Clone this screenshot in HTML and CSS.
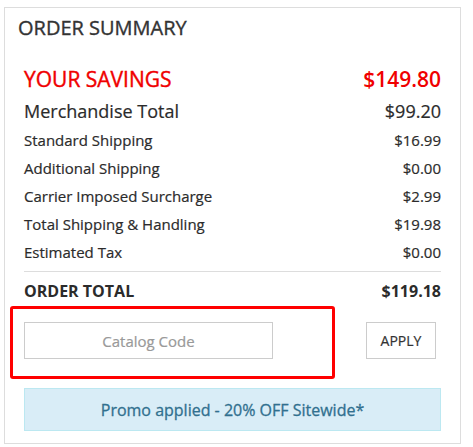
FILE: index.html
```html
<!DOCTYPE html>
<html>
<head>
<meta charset="utf-8">
<link rel="stylesheet" href="styles.css">
</head>
<body>
<div class="page">
  <div class="card">
    <h2 class="title">ORDER SUMMARY</h2>
    <div class="body">
      <div class="row savings"><span>YOUR SAVINGS</span><span class="amt">$149.80</span></div>
      <div class="row merch"><span>Merchandise Total</span><span>$99.20</span></div>
      <div class="row small"><span>Standard Shipping</span><span>$16.99</span></div>
      <div class="row small"><span>Additional Shipping</span><span>$0.00</span></div>
      <div class="row small"><span>Carrier Imposed Surcharge</span><span>$2.99</span></div>
      <div class="row small"><span>Total Shipping &amp; Handling</span><span>$19.98</span></div>
      <div class="row small"><span>Estimated Tax</span><span>$0.00</span></div>
      <div class="row total"><span>ORDER TOTAL</span><span>$119.18</span></div>
      <div class="code-row">
        <input class="code-input" type="text" placeholder="Catalog Code">
        <button class="apply">APPLY</button>
        <div class="highlight"></div>
      </div>
      <div class="promo">Promo applied - 20% OFF Sitewide*</div>
    </div>
  </div>
</div>
</body>
</html>
```

FILE: styles.css
```css
html, body {
  margin: 0;
  padding: 0;
  background: #fff;
}
body {
  font-family: "Open Sans", "Liberation Sans", sans-serif;
  color: #2b2b2b;
  -webkit-text-stroke: 0.2px currentColor;
}
.page {
  padding: 7px 12px 2px 4px;
}
.card {
  border: 1px solid #ddd;
  padding: 8px 13px 12px 13px;
}
.title {
  margin: 0;
  font-size: 20px;
  font-weight: 400;
  line-height: 24px;
  color: #333;
  -webkit-text-stroke: 0.35px currentColor;
}
.body {
  padding: 0 6px;
  margin-top: 25px;
}
.row {
  display: flex;
  justify-content: space-between;
  align-items: baseline;
}
.savings {
  color: #f00000;
  font-size: 21px;
  line-height: 28px;
  font-weight: 400;
  -webkit-text-stroke: 0.4px currentColor;
}
.savings .amt {
  font-weight: 600;
  -webkit-text-stroke: 0;
}
.merch {
  font-size: 18px;
  line-height: 30px;
  margin-top: 3px;
}
.small {
  font-size: 15px;
  line-height: 28px;
}
.total {
  border-top: 1px solid #ddd;
  margin-top: 5px;
  padding-top: 5px;
  font-size: 16px;
  line-height: 28px;
  font-weight: 700;
  -webkit-text-stroke: 0;
}
.code-row {
  position: relative;
  display: flex;
  justify-content: space-between;
  margin-top: 17px;
  padding-right: 5px;
}
.code-input {
  box-sizing: border-box;
  width: 249px;
  height: 37px;
  border: 1px solid #ccc;
  margin: 0;
  padding: 0 10px;
  font-family: "Open Sans", "Liberation Sans", sans-serif;
  font-size: 15px;
  text-align: center;
  color: #333;
  background: #fff;
  -webkit-text-stroke: 0.2px currentColor;
}
.code-input::placeholder {
  color: #999;
}
.apply {
  box-sizing: border-box;
  width: 70px;
  height: 37px;
  border: 1px solid #ccc;
  background: #fff;
  margin: 0;
  padding: 0;
  font-family: "Open Sans", "Liberation Sans", sans-serif;
  font-size: 14px;
  color: #333;
  -webkit-text-stroke: 0.2px currentColor;
}
.highlight {
  position: absolute;
  left: -14px;
  top: -16px;
  width: 325px;
  height: 73px;
  box-sizing: border-box;
  border: 3px solid #ff0000;
  border-radius: 3px;
  pointer-events: none;
}
.promo {
  margin-top: 29px;
  box-sizing: border-box;
  height: 43px;
  background: #d9edf7;
  border: 1px solid #bce8f1;
  color: #31708f;
  font-size: 16px;
  -webkit-text-stroke: 0.3px currentColor;
  display: flex;
  align-items: center;
  justify-content: center;
}
```
